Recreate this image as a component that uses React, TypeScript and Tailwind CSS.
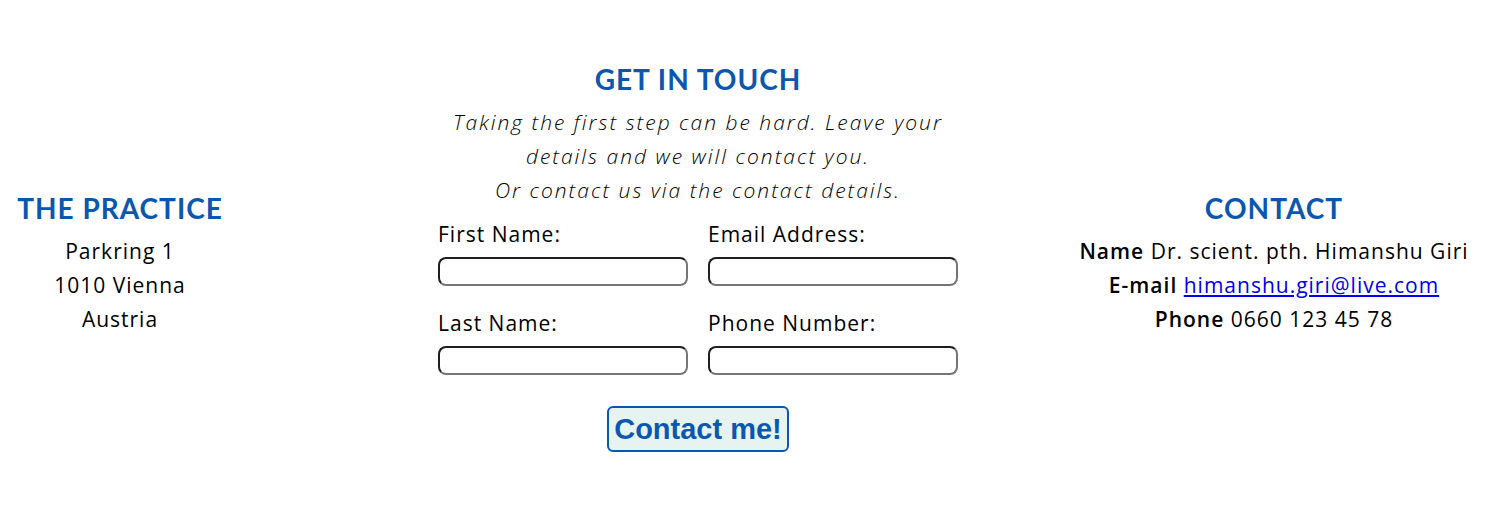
import React from 'react';

const body = { fontFamily: '"Open Sans", "Noto Sans", sans-serif' };
const head = { fontFamily: 'Lato, "Open Sans", sans-serif' };

function Field({ label }: { label: string }) {
  return (
    <div className="flex flex-col">
      <label className="text-[21px] leading-[34px] tracking-[1px] text-black">{label}</label>
      <input
        type="text"
        className="mt-[6px] h-[29px] w-[250px] rounded-[8px] border-2 border-solid border-t-[#1f1f1f] border-l-[#1f1f1f] border-b-[#767676] border-r-[#767676] bg-white outline-none"
      />
    </div>
  );
}

export default function App() {
  return (
    <div className="flex h-[522px] w-[1508px] items-center bg-white pb-[8px]" style={body}>
      {/* The practice */}
      <div className="flex w-[240px] flex-col items-center pt-[12px] text-center">
        <h2 className="text-[28px] font-bold leading-[34px] tracking-[1px] text-[#0b57b0]" style={head}>
          THE PRACTICE
        </h2>
        <p className="mt-[9px] text-[21px] leading-[34px] tracking-[1px] text-black">
          Parkring 1
          <br />
          1010 Vienna
          <br />
          Austria
        </p>
      </div>

      {/* Form */}
      <div className="ml-[198px] flex w-[520px] flex-col items-center">
        <h2 className="text-[28px] font-bold leading-[34px] tracking-[1px] text-[#0b57b0]" style={head}>
          GET IN TOUCH
        </h2>
        <p className="mt-[9px] text-center text-[21px] italic font-light leading-[34px] tracking-[2px] text-black">
          Taking the first step can be hard. Leave your
          <br />
          details and we will contact you.
          <br />
          Or contact us via the contact details.
        </p>
        <div className="mt-[10px] grid w-full grid-cols-2 gap-x-[20px] gap-y-[20px]">
          <Field label="First Name:" />
          <Field label="Email Address:" />
          <Field label="Last Name:" />
          <Field label="Phone Number:" />
        </div>
        <button
          className="mt-[31px] h-[46px] w-[182px] rounded-[6px] border-2 border-solid border-[#0b57b0] bg-[#e6f3f1] text-[29px] font-bold text-[#0b57b0]"
          style={{ fontFamily: '"Liberation Sans", Arial, sans-serif' }}
        >
          Contact me!
        </button>
      </div>

      {/* Contact */}
      <div className="ml-[82px] flex flex-1 flex-col items-center pt-[12px] text-center">
        <h2 className="text-[28px] font-bold leading-[34px] tracking-[1px] text-[#0b57b0]" style={head}>
          CONTACT
        </h2>
        <p className="mt-[9px] text-[21px] leading-[34px] tracking-[1px] text-black">
          <b className="font-semibold">Name</b> Dr. scient. pth. Himanshu Giri
          <br />
          <b className="font-semibold">E-mail</b>{' '}
          <a href="#" className="text-[#0000ee] underline">
            himanshu.giri@live.com
          </a>
          <br />
          <b className="font-semibold">Phone</b> 0660 123 45 78
        </p>
      </div>
    </div>
  );
}
